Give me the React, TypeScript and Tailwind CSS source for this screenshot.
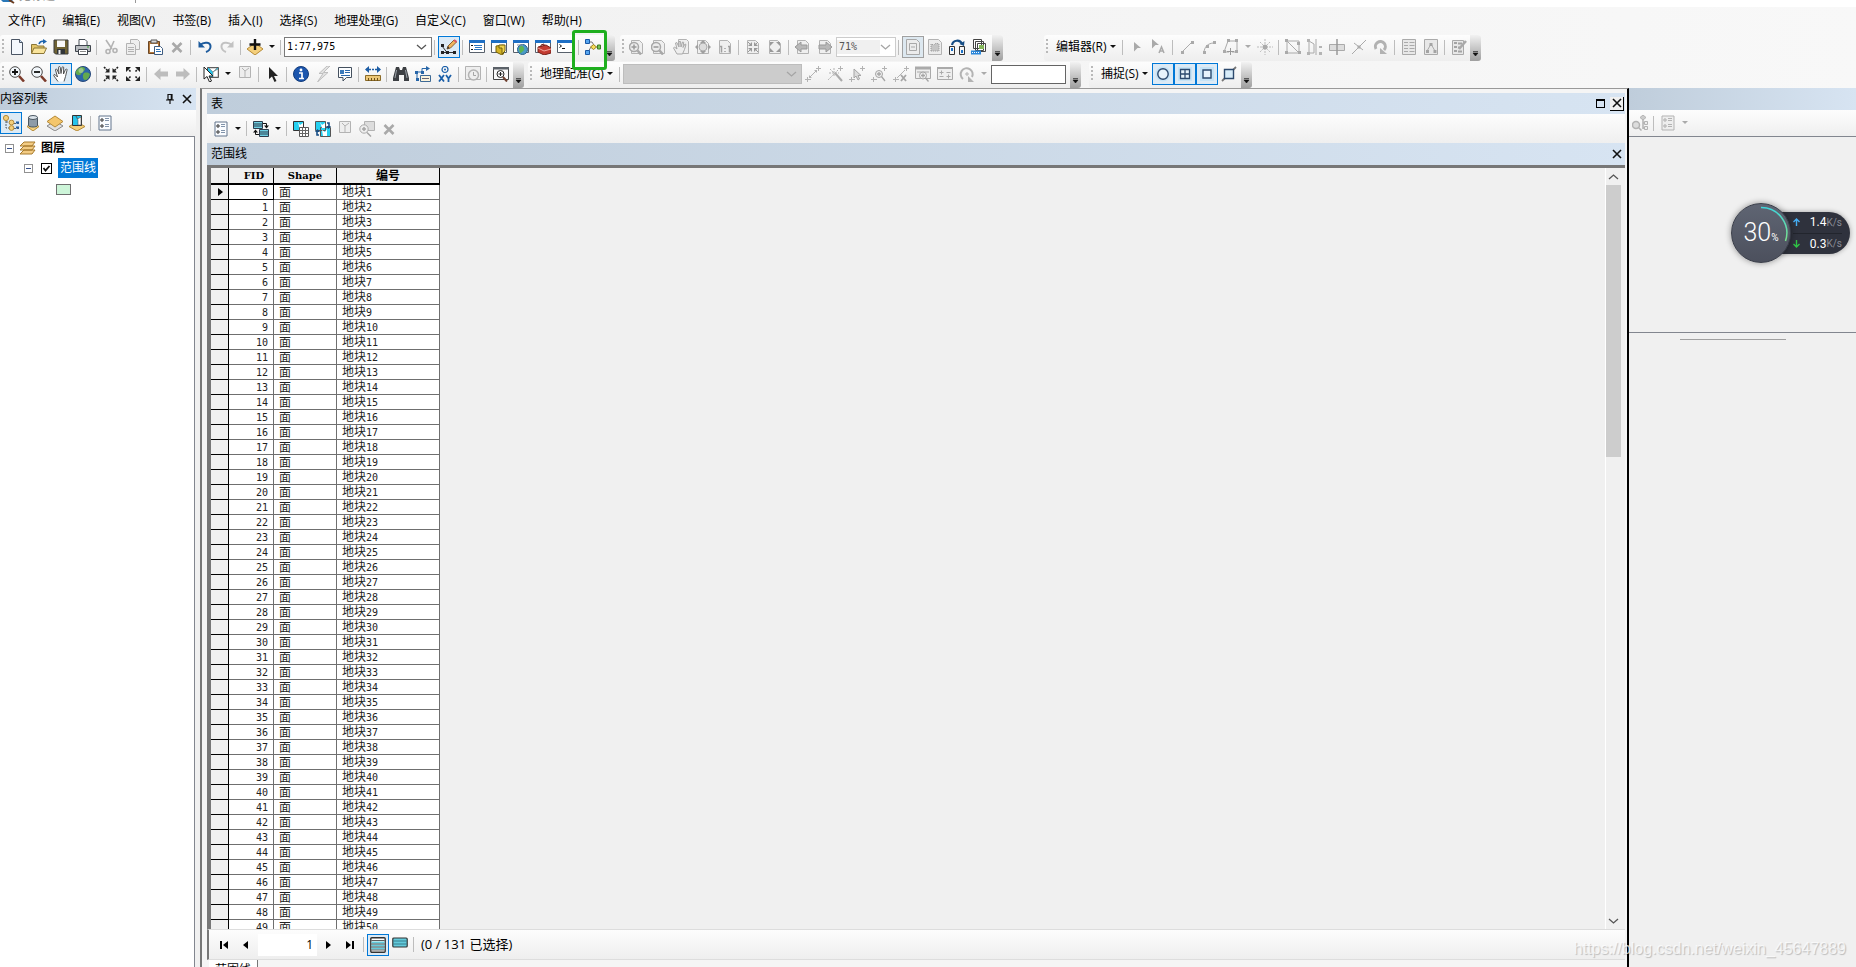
import React from 'react';

const G = '#b3b3b3';

const page = <path d="M2.5 1.5h8l3 3v10h-11z" fill="#efefef" stroke={G} />;
const win = (
  <>
    <path d="M.5 1.5h15v12H.5z" fill="#fff" stroke="#58606b" />
    <path d="M0 1h16v3H0z" fill="#1f6fc4" />
  </>
);
const plus = <path d="M11 2.5h5M13.5 0v5" stroke={G} fill="none" />;
const cross = <path d="M0 13.5h6M2.5 11v5" stroke={G} fill="none" />;

const icons: Record<string, React.ReactNode> = {
  new: (
    <>
      <path d="M2.5 .5h8l3 3v12h-11z" fill="#f4f8fd" stroke="#4a5564" />
      <path d="M10.5 .5v3h3" fill="#c8dcf0" stroke="#4a5564" />
    </>
  ),
  open: (
    <>
      <path d="M.5 14V5.5h5l1 1.5h6.500v3" fill="#e2c568" stroke="#8a7535" />
      <path d="M.5 14.5 3 9h12.500L13 14.5z" fill="#f9e49c" stroke="#8a7535" />
      <path d="M8 5c1-2.500 3-3 5-2.500" fill="none" stroke="#1d64ad" strokeWidth="1.600" />
      <path d="m12 0 4 2.500L12 5z" fill="#1d64ad" />
    </>
  ),
  save: (
    <>
      <path d="M1 1h14v14H2.500L1 13.500z" fill="#6f6232" stroke="#383a3c" />
      <path d="M4 1.500h8V8H4z" fill="#f8f8f8" />
      <path d="M4 10h8v5H4z" fill="#303438" />
      <path d="M5.500 11h2v4h-2z" fill="#eee" />
    </>
  ),
  print: (
    <>
      <path d="M4 6V.5h6l2 2V6" fill="#fff" stroke="#4a5058" />
      <path d="M.5 6.500h15v6H.5z" fill="#b9bcc0" stroke="#3f454d" />
      <path d="M3.500 10.500h9v5h-9z" fill="#fff" stroke="#3f454d" />
      <path d="M5 12.500h6" stroke="#888" />
      <path d="M12 8h2" stroke="#37a637" />
    </>
  ),
  cut: (
    <g fill="none" stroke={G} strokeWidth="1.600">
      <path d="m3 1 6 9M11 2 7 11" />
      <circle cx="5" cy="12.500" r="2" />
      <circle cx="12" cy="11.500" r="2" />
    </g>
  ),
  copy: (
    <>
      <path d="M5.500 .5h7l2 2v8h-9z" fill="#eee" stroke={G} />
      <path d="M1.500 4.500h7l2 2v9h-9z" fill="#eee" stroke={G} />
      <path d="M3 8.500h6M3 10.500h6M3 12.500h6" stroke={G} />
    </>
  ),
  paste: (
    <>
      <path d="M1.500 2.500h11v12h-11z" fill="#b5793a" stroke="#6b4726" />
      <path d="M4 1h6v3H4z" fill="#d9d9d9" stroke="#555" />
      <path d="M3 5h8v8H3z" fill="#fff" />
      <path d="M7.500 7.500h6l2 2v6h-8z" fill="#fff" stroke="#3f5c80" />
      <path d="M9 10.500h4M9 12.500h5" stroke="#2f74b8" />
    </>
  ),
  del: <path d="m3.500 4 9 9M12.500 4l-9 9" stroke="#a9a9a9" strokeWidth="2.600" fill="none" />,
  undo: (
    <>
      <path d="M3 6c4-3.500 11-3 10.500 2-.3 2.500-2 4-4.500 5" fill="none" stroke="#1c5a9c" strokeWidth="2" />
      <path d="M1.500 2v6.500H8z" fill="#1c5a9c" />
    </>
  ),
  redo: (
    <>
      <path d="M13 6C9 2.500 2 3 2.500 8c.3 2.500 2 4 4.500 5" fill="none" stroke="#c2c2c2" strokeWidth="2" />
      <path d="M14.500 2v6.500H8z" fill="#c2c2c2" />
    </>
  ),
  add: (
    <>
      <path d="m8 4 8 6-8 6-8-6z" fill="#f4cf7b" stroke="#b58a37" />
      <path d="M8 0v11M2.500 5.500h11" stroke="#111" strokeWidth="2.400" />
    </>
  ),
  editor: (
    <>
      <path d="m1 7 5 6.500h9M1 13.500h5" stroke="#333" fill="none" />
      <path d="M0 5h3v3H0zM5 12h3v3H5zM0 12h3v3H0zM12 12h3v3h-3z" fill="#222" />
      <path d="m6 10 1-3 6-6 2.500 2-6 6z" fill="#f0b45c" stroke="#8c6130" />
      <path d="m13 1 2.500 2" stroke="#d8586a" strokeWidth="2" />
      <path d="m6 10 1-3 1.500 2z" fill="#333" />
    </>
  ),
  toc: (
    <>
      {win}
      <path d="M2 6.500h2M2 10.500h2" stroke="#111" />
      <path d="M5 6.500h8M6 8.500h7M5 10.500h8" stroke="#2b74bf" />
    </>
  ),
  catalog: (
    <>
      {win}
      <path d="M5 7v6l6 3 1.500-1V6z" fill="#d5b322" stroke="#75610d" />
      <path d="M8 6h6v6l-3 3V9H8z" fill="#f0d54e" stroke="#75610d" />
    </>
  ),
  search: (
    <>
      {win}
      <circle cx="9.500" cy="10.500" r="5" fill="#4a9bc6" stroke="#27618d" />
      <path d="M6 9c2-3 4-2 5 0s-2 4-3 5-2-3-2-5z" fill="#5cb552" />
      <path d="M4 6h6" stroke="#88939e" />
    </>
  ),
  toolbox: (
    <>
      {win}
      <path d="M3 8 11 6l5 3v5l-7 2-6-3z" fill="#c33b31" stroke="#762019" />
      <path d="M6 8V6l3-1v2" fill="none" stroke="#762019" />
      <path d="m3 9 6 3 7-2" fill="none" stroke="#f1a69c" />
    </>
  ),
  python: (
    <>
      {win}
      <path d="m2.500 5.500 2 1.500-2 1.500" stroke="#111" fill="none" />
      <path d="M5 9.500h3" stroke="#111" />
    </>
  ),
  model: (
    <>
      <path d="M3 3h4l3 5H6l-3 5M9 8h4" fill="none" stroke="#777" />
      <path d="M.5 .5h4v4h-4zM.5 11.500h4v4h-4z" fill="#56a5ef" stroke="#1857a5" />
      <path d="m8.500 5.500 3 2.500-3 2.500-3-2.500z" fill="#f9de59" stroke="#9c8320" />
      <path d="M12.500 6h3v4h-3z" fill="#77c255" stroke="#3c7c23" />
    </>
  ),
  pZoomIn: (
    <>
      {page}
      <circle cx="5" cy="8" r="4.500" fill="#ececec" stroke="#a8a8a8" strokeWidth="1.500" />
      <path d="M2.500 8h5M5 5.500v5" stroke="#999" strokeWidth="1.500" />
      <path d="m8.500 11.500 3.500 4" stroke="#a8a8a8" strokeWidth="2.500" />
    </>
  ),
  pZoomOut: (
    <>
      {page}
      <circle cx="5" cy="8" r="4.500" fill="#ececec" stroke="#a8a8a8" strokeWidth="1.500" />
      <path d="M2.500 8h5" stroke="#999" strokeWidth="1.500" />
      <path d="m8.500 11.500 3.500 4" stroke="#a8a8a8" strokeWidth="2.500" />
    </>
  ),
  pPan: (
    <>
      <path d="M5.500 .5h8l2 2v12h-10z" fill="#efefef" stroke={G} />
      <path d="m4 15-3.500-6 1-1L4 10 2.500 4l1.300-.5L6 8V2.500h1.500L8 8l1.500-5 1.200.3L10 8.500l2-3.500 1 .5-1.500 5L9.500 15z" fill="#eee" stroke="#a8a8a8" />
    </>
  ),
  pFull: (
    <>
      {page}
      <circle cx="8" cy="8" r="4" fill="#ddd" stroke="#aaa" />
      <path d="m8 1 3 3H5zM8 15l3-3H5zM0 8l3-3v6zM16 8l-3-3v6z" fill="#a0a0a0" />
    </>
  ),
  p11: (
    <>
      {page}
      <path d="M3 7.500h1.500v6M11 7.500h1.500v6M8 9v1M8 12v1" stroke="#a0a0a0" fill="none" strokeWidth="1.500" />
    </>
  ),
  pIn: (
    <>
      {page}
      <path d="m3 3 3 3M13 3l-3 3M3 13l3-3M13 13l-3-3" stroke="#999" />
      <path d="M7 3v4H3zM9 3v4h4zM7 13V9H3zM9 13V9h4z" fill="#999" />
    </>
  ),
  pOut: (
    <>
      {page}
      <path d="M3 3h4L3 7zM13 3H9l4 4zM3 13h4L3 9zM13 13H9l4-4z" fill="#999" />
    </>
  ),
  pBack: (
    <>
      {page}
      <path d="m0 8 6-5v3h6v4H6v3z" fill="#b8b8b8" stroke="#999" />
    </>
  ),
  pFwd: (
    <>
      {page}
      <path d="m15 8-6-5v3H2v4h7v3z" fill="#b8b8b8" stroke="#999" />
    </>
  ),
  draft: (
    <>
      <path d="M1.500 .5h10l3 3v12h-13z" fill="#ececec" stroke="#a8a8a8" />
      <path d="M4.500 4.500h7v7h-7zM6 8h4" fill="none" stroke="#a8a8a8" />
    </>
  ),
  frame: (
    <>
      <path d="M1.500 .5h10l3 3v12h-13z" fill="#ececec" stroke={G} />
      <path d="M4 12V5l3 1 2-2 3 1v7z" fill="#c5c5c5" stroke="#999" strokeDasharray="1 1" />
    </>
  ),
  layout: (
    <>
      <path d="M.5 7.500h5v8h-5zM10.500 7.500h5v8h-5z" fill="#f6f6f6" stroke="#333" />
      <path d="M2 9h2v3H2zM12 11h2v3h-2z" fill="#1c72c8" />
      <path d="M3 6c1-5 8-6 10-1" fill="none" stroke="#174e86" strokeWidth="2.200" />
      <path d="m15.500 2-.5 5-4.500-2z" fill="#174e86" />
    </>
  ),
  ddp: (
    <>
      <path d="M2.500 .5h8v9h-8zM4.500 2.500h8v9h-8zM6.500 4.500h8v8h-8z" fill="#fff" stroke="#444" />
      <path d="M8 6h5v4H8z" fill="#84b65a" />
      <path d="M0 11.500h10v4H0z" fill="#2a86d9" />
      <path d="M1 13.500h8" stroke="#fff" strokeDasharray="1 1" />
    </>
  ),
  edArrow: <path d="m5 3 7 6H8.500L5 12.500z" fill="#aaa" />,
  edAnno: (
    <>
      <path d="m1 0 7 6H4.500L1 9.500z" fill="#aaa" />
      <path d="m8 14 2.500-6L13 14M9 12h3.500" stroke="#aaa" strokeWidth="1.500" fill="none" />
    </>
  ),
  edLine: (
    <>
      <path d="m3 13 10-10" stroke="#aaa" />
      <path d="M2 12h3v3H2zM12 2h3v3h-3z" fill="#aaa" />
    </>
  ),
  edArc: (
    <>
      <path d="M3 14c0-6 4-10 10-10" stroke="#aaa" fill="none" />
      <path d="M2 12h3v3H2zM5 6h3v3H5zM12 2h3v3h-3z" fill="#aaa" />
    </>
  ),
  edPoly: (
    <>
      <path d="M5 2h9v11H9M5 2 1 13h5" stroke="#aaa" fill="none" />
      <path d="M4 0h3v3H4zM12 0h3v3h-3zM12 11h3v3h-3zM0 11h3v3H0z" fill="#aaa" />
      <path d="M7.500 9v7M4 12.500h7" stroke="#999" />
    </>
  ),
  edPoint: (
    <>
      <path d="M8 0v16M0 8h16" stroke="#bbb" strokeDasharray="2 1" />
      <path d="m3 3 10 10M13 3 3 13" stroke="#bbb" strokeDasharray="2 1" />
      <circle cx="8" cy="8" r="2.500" fill="#aaa" />
    </>
  ),
  edVert: (
    <>
      <path d="M2 2h12v12H2zM2 2l12 12" stroke="#aaa" fill="none" />
      <path d="M0 0h3v3H0zM12 3h3v3h-3zM0 12h3v3H0zM13 12h3v3h-3z" fill="#aaa" />
    </>
  ),
  edReshape: (
    <>
      <path d="M2 2v12h5V5zM9 0v16" stroke="#aaa" fill="none" />
      <path d="M0 0h3v3H0zM0 13h3v3H0zM12 7h3v2h-3zM12 13h3v3h-3z" fill="#b4b4b4" />
    </>
  ),
  edCut: (
    <>
      <path d="M.5 5.500h15v6H.5z" fill="#ddd" stroke="#aaa" />
      <path d="M8 0v16" stroke="#999" strokeWidth="1.500" />
    </>
  ),
  edSplit: (
    <>
      <path d="M1 15 15 1M3 4l9 7" stroke="#aaa" />
      <path d="M6.500 6.500h3v3h-3z" fill="#aaa" />
    </>
  ),
  rotate: (
    <>
      <path d="M3 10A5 5 0 1 1 11 11" fill="none" stroke="#b2b2b2" strokeWidth="3" />
      <path d="M7 9v6h7z" fill="#b2b2b2" />
    </>
  ),
  attrs: (
    <>
      <path d="M1.500 .5h13v15h-13z" fill="#e8e8e8" stroke="#aaa" />
      <path d="M3 3.500h4M3 6.500h4M3 9.500h4M3 12.500h4M8.500 3.500h5M8.500 6.500h5M8.500 9.500h5M8.500 12.500h5" stroke="#aaa" />
    </>
  ),
  sketch: (
    <>
      <path d="M1.500 .5h13v15h-13z" fill="#e8e8e8" stroke="#aaa" />
      <path d="M4 12l4-7 4 7" fill="none" stroke="#aaa" />
      <path d="M3 11h3v3H3zM6.500 4h3v3h-3zM10.500 11h3v3h-3z" fill="#a4a4a4" />
    </>
  ),
  create: (
    <>
      <path d="M1.500 1.500h11v14h-11z" fill="#e8e8e8" stroke="#aaa" />
      <path d="M3 4h3M3 8h3M3 12h3M7 4.500h4M7 8.500h2M7 12.500h4" stroke="#a4a4a4" strokeWidth="2" />
      <path d="m8 10 7-8" stroke="#aaa" strokeWidth="2.500" />
    </>
  ),
  zoomIn: (
    <>
      <circle cx="6" cy="6" r="5.300" fill="#f2f7fb" stroke="#4b4b4b" />
      <path d="M3 6h6M6 3v6" stroke="#111" strokeWidth="1.800" />
      <path d="m10 10 5 5.500" stroke="#7c3b2b" strokeWidth="2.600" />
    </>
  ),
  zoomOut: (
    <>
      <circle cx="6" cy="6" r="5.300" fill="#f2f7fb" stroke="#4b4b4b" />
      <path d="M3 6h6" stroke="#111" strokeWidth="1.800" />
      <path d="m10 10 5 5.500" stroke="#7c3b2b" strokeWidth="2.600" />
    </>
  ),
  pan: (
    <path d="M5 15.500 1 10c-1-1.500.5-2 1.500-1L4.500 11 2.500 4C2.300 2.800 3.800 2.500 4.200 3.800L6 8 5.500 1.500C5.600.2 7.200.3 7.300 1.500L8 7.500l1-6c.3-1.200 1.800-1 1.700.3L10.500 8l2-4.500c.6-1 1.900-.5 1.500.7l-1.500 6.300-1.500 5" fill="#fff" stroke="#444" strokeWidth=".9" />
  ),
  globe: (
    <>
      <circle cx="8" cy="8" r="7.500" fill="#2c66a8" stroke="#26477a" />
      <path d="M3 3c3-3 7-2 7 0S7 6 6 8s-4 1-5 0 0-4 2-5zM9 7c3-1 5 0 6 1-1 4-3 6-5 6S7 9 9 7z" fill="#63a94d" />
      <circle cx="6" cy="4.500" r="2.500" fill="#fff" opacity=".35" />
    </>
  ),
  fixIn: (
    <>
      <path d="m1 1 4 4M15 1l-4 4M1 15l4-4M15 15l-4-4" stroke="#222" strokeWidth="1.600" strokeDasharray="2 1" />
      <path d="M6.500 2v4.500H2zM9.500 2v4.500H14zM6.500 14V9.500H2zM9.500 14V9.500H14z" fill="#222" />
    </>
  ),
  fixOut: (
    <>
      <path d="m2 2 4 4M14 2l-4 4M2 14l4-4M14 14l-4-4" stroke="#222" strokeWidth="1.600" strokeDasharray="2 1" />
      <path d="M1 1h5L1 6zM15 1h-5l5 5zM1 15h5l-5-5zM15 15h-5l5-5z" fill="#222" />
    </>
  ),
  back: <path d="m1 8 6.500-6v3.500H15v5H7.500V14z" fill="#bdbdbd" />,
  fwd: <path d="m15 8-6.500-6v3.500H1v5h7.500V14z" fill="#bdbdbd" />,
  select: (
    <>
      <path d="M4.500 1.500h11v10h-11z" fill="#27c3e8" stroke="#555" />
      <path d="m6 2 4 4 4-4zM10 6v5h5V3z" fill="#fff" stroke="#777" strokeWidth=".6" />
      <path d="M1 1v12l3-2.500L6.500 16l2-1-2.500-5h4z" fill="#fff" stroke="#222" />
    </>
  ),
  clear: (
    <>
      <path d="M2.500 .5h11v11h-11z" fill="#eee" stroke={G} />
      <path d="m5 2 3 3 4-3M8 5v6" stroke={G} fill="none" />
    </>
  ),
  pointer: <path d="M4 1v12l3-2.500L9.500 16l2-1L9 10h4z" fill="#222" />,
  info: (
    <>
      <circle cx="8" cy="8" r="7.500" fill="#1c56ae" stroke="#123b7b" />
      <circle cx="8" cy="4" r="1.400" fill="#fff" />
      <path d="M6 7h3v5M6 12.500h5" stroke="#fff" strokeWidth="1.700" fill="none" />
    </>
  ),
  bolt: <path d="M12 0 4 7.500h4L2.500 16 13 6.500H8.500L15 0z" fill="#e2e2e2" stroke="#b4b4b4" strokeWidth=".8" />,
  html: (
    <>
      <path d="M1.500 1.500h13v10h-5L6 15v-3.500H1.500z" fill="#fbfdff" stroke="#44505e" />
      <path d="M3 4h4v4H3z" fill="#3b7abb" />
      <path d="M8 4.500h5M8 6.500h5M4 9.500h9" stroke="#2c68aa" />
    </>
  ),
  measure: (
    <>
      <path d="M1 3.500h14" stroke="#1d5da5" strokeWidth="1.500" strokeDasharray="5 1 2 1" />
      <path d="M0 3.500 4 0v7zM16 3.500 12 0v7z" fill="#1d5da5" />
      <path d="M.5 9.500h15v5H.5z" fill="#ecc777" stroke="#8a6a27" />
      <path d="M3.500 12v3M6.500 12v3M9.500 12v3M12.500 12v3" stroke="#6d5018" />
    </>
  ),
  find: (
    <>
      <path d="M3 1h3l1 3h2l1-3h3l3 11v3h-5V9H6v6H0v-3z" fill="#3c3f43" />
      <path d="M3.500 4 2 12M12.500 4l1.500 8" stroke="#9ca3aa" />
    </>
  ),
  route: (
    <>
      <path d="M5.500 9.500h10v6h-10z" fill="#fbf3dc" stroke="#3f6a95" />
      <path d="M2 13V6h5V2.500h5" fill="none" stroke="#2766a8" />
      <path d="M0 5h3v3H0zM11 0l4 2.500L11 5zM1 12h3v3H1zM6 5h3v3H6z" fill="#2766a8" />
      <path d="M7 12.500h7" stroke="#667" />
    </>
  ),
  xy: (
    <>
      <circle cx="8" cy="3.500" r="3" fill="none" stroke="#1b5fa8" strokeWidth="1.200" />
      <circle cx="8" cy="3.500" r="1" fill="#1b5fa8" />
      <path d="m2 9 5 6.500M7 9l-5 6.500M9 9l2.500 3.500V16M14 9l-2.500 3.500" fill="none" stroke="#1b5fa8" strokeWidth="1.800" />
    </>
  ),
  time: (
    <>
      <path d="M.5 .5h15v13H.5z" fill="#eee" stroke={G} />
      <circle cx="8.500" cy="9" r="5" fill="#eee" stroke={G} strokeWidth="1.500" />
      <path d="M8.500 6v3.500H11" stroke="#a5a5a5" fill="none" />
    </>
  ),
  viewer: (
    <>
      <path d="M.5 1.500h15v12H.5z" fill="#fafafa" stroke="#444" />
      <path d="M0 1h16v2.500H0z" fill="#5b6168" />
      <circle cx="7.500" cy="8" r="3.500" fill="#fff" stroke="#222" />
      <path d="M5.500 8h4M7.500 6v4" stroke="#222" />
      <path d="m10 11 4 4.500" stroke="#704030" strokeWidth="2" />
    </>
  ),
  gLink: (
    <>
      {plus}
      {cross}
      <path d="m4 12 8-8" stroke={G} />
      <path d="M9 4h3v3zM4 9v3h3z" fill={G} />
    </>
  ),
  gWand: (
    <>
      {plus}
      <path d="m8 7 7 8" stroke="#aaa" strokeWidth="2" />
      <path d="m3 3 8 8M11 4 1 14M7 2v9M2 7h10" stroke={G} strokeDasharray="2 1" />
    </>
  ),
  gSel: (
    <>
      {plus}
      {cross}
      <path d="M5 3v9l2-2 2 4 1.500-1L9 9.500h3z" fill="#ddd" stroke="#a5a5a5" />
    </>
  ),
  gZoom: (
    <>
      {plus}
      {cross}
      <circle cx="8" cy="8" r="3.500" fill="#eee" stroke="#a5a5a5" />
      <path d="M6 8h4M8 6v4M10.500 10.500 14 15" stroke="#a5a5a5" strokeWidth="1.300" />
    </>
  ),
  gDel: (
    <>
      {plus}
      {cross}
      <path d="m4 12 8-8" stroke={G} />
      <path d="m8 9 5 6M13 9l-5 6" stroke="#a5a5a5" strokeWidth="1.800" />
    </>
  ),
  gView: (
    <>
      <path d="M.5 1.500h15v11H.5z" fill="#eee" stroke="#aaa" />
      <path d="M0 1h16v2H0zM2 6h12" fill="#aaa" stroke="#aaa" />
      <circle cx="8" cy="9.500" r="3.500" fill="#eee" stroke="#a5a5a5" />
      <path d="M6 9.500h4M8 7.500v4M10.500 12l3 3.500" stroke="#a5a5a5" strokeWidth="1.300" />
    </>
  ),
  gTable: (
    <>
      <path d="M.5 1.500h15v12H.5z" fill="#eee" stroke="#aaa" />
      <path d="M0 1h16v2H0z" fill="#aaa" />
      <path d="M2.500 6.500h4M9.500 6.500h4M2.500 10.500h4M9.500 10.500h4M4.500 4.500v4M11.500 8.500v4" stroke="#aaa" />
    </>
  ),
  gRotate: (
    <>
      <path d="M4 13A6 6 0 1 1 13 11" fill="none" stroke={G} strokeWidth="2" />
      <path d="M9 10v6h6z" fill={G} />
      <path d="M8 6v4M6 8h4" stroke={G} />
    </>
  ),
  snapPoint: (
    <>
      <circle cx="8" cy="8" r="7.500" fill="#c6e3f6" />
      <circle cx="8" cy="8" r="5.200" fill="#e7f3fb" stroke="#2d4a6e" strokeWidth="1.400" />
    </>
  ),
  snapEnd: (
    <>
      <path d="M1 1h14v14H1z" fill="#c6e3f6" />
      <path d="M3.500 3.500h9v9h-9zM8 3.500v9M3.500 8h9" fill="#e7f3fb" stroke="#2d4a6e" strokeWidth="1.300" />
    </>
  ),
  snapVertex: (
    <>
      <path d="M1 1h14v14H1z" fill="#c6e3f6" />
      <path d="M4 4h8v8H4z" fill="#e7f3fb" stroke="#2d4a6e" strokeWidth="1.400" />
    </>
  ),
  snapEdge: (
    <>
      <path d="M1 15 15 1" stroke="#777" strokeWidth="1.800" />
      <path d="M3.500 3.500h9v9h-9z" fill="#d8ecf9" stroke="#2d4a6e" strokeWidth="1.400" />
    </>
  ),
  listOrder: (
    <>
      <path d="M3 3v10h5M3 7h5M11 8.500h5M11 13.500h5" stroke="#56616d" fill="none" strokeDasharray="2 1" />
      <circle cx="3" cy="3" r="2.600" fill="#f4cf7b" stroke="#b58a37" />
      <circle cx="8.500" cy="7.500" r="2.400" fill="#f4cf7b" stroke="#b58a37" />
      <circle cx="8.500" cy="13" r="2.400" fill="#f4cf7b" stroke="#b58a37" />
      <path d="M13 7.500h3M13 12.500h3" stroke="#1e5fa8" strokeWidth="2" />
    </>
  ),
  listSource: (
    <>
      <path d="m8 7 6 4.500L8 16l-6-4.500z" fill="#f4cf7b" stroke="#b58a37" />
      <path d="M3.500 2.500v8c0 2 9 2 9 0v-8z" fill="#8e9ba8" stroke="#4a5661" />
      <ellipse cx="8" cy="2.500" rx="4.500" ry="2" fill="#dbe3ea" stroke="#4a5661" />
    </>
  ),
  listVisible: (
    <>
      <path d="m8 6 8 5-8 5-8-5z" fill="#e0e0e0" stroke="#888" />
      <path d="m8 1 8 5.500L8 12 0 6.500z" fill="#f4c66c" stroke="#b58a37" />
    </>
  ),
  listSelected: (
    <>
      <path d="m8 7 8 4.500L8 16l-8-4.500z" fill="#f4cf7b" stroke="#b58a37" />
      <path d="M3.500 .5h9v10h-9z" fill="#25c4ec" stroke="#333" />
      <path d="m7 1 1.500 3L12 2v8H9V5z" fill="#fff" stroke="#555" strokeWidth=".6" />
    </>
  ),
  options: (
    <>
      <path d="M2 1h12v14H2z" fill="#fafcff" stroke="#63758c" />
      <circle cx="5" cy="5" r="1.200" fill="none" stroke="#222" />
      <circle cx="5" cy="11" r="1.200" fill="none" stroke="#222" />
      <path d="M8 3.500h4M8 5.500h4M8 9.500h4M8 11.500h4" stroke="#8193aa" />
    </>
  ),
  optionsOff: (
    <>
      <path d="M2 1h12v14H2z" fill="#eee" stroke={G} />
      <circle cx="5" cy="5" r="1.200" fill="none" stroke="#aaa" />
      <circle cx="5" cy="11" r="1.200" fill="none" stroke="#aaa" />
      <path d="M8 3.500h4M8 5.500h4M8 9.500h4M8 11.500h4" stroke={G} />
    </>
  ),
  treeOff: (
    <>
      <circle cx="4" cy="10" r="3.500" fill="#ddd" stroke={G} strokeWidth="1.500" />
      <path d="m6.500 12.500 3 3M11 5v9M11 8h5M11 13h5" stroke={G} strokeWidth="1.500" />
      <path d="m11 0 3 2.500L11 5 8 2.500z" fill="#ccc" stroke={G} />
      <path d="M12.500 6.500h3v3h-3zM12.500 11.500h3v3h-3z" fill="#eee" stroke={G} />
    </>
  ),
  related: (
    <>
      <path d="M.5 .5h9v7h-9zM6.500 8.500h9v7h-9z" fill="#6fd0e4" stroke="#2d3d4d" />
      <path d="M.5 3h9M.5 5h9M6.500 11h9M6.500 13h9" stroke="#2d3d4d" />
      <path d="M10 2.500h3.500V5M6 13.500H2.500V11" fill="none" stroke="#111" />
      <path d="M11 4.500h5l-2.500 3zM0 11.500h5L2.500 8.500z" fill="#111" />
    </>
  ),
  selTable: (
    <>
      <path d="M.5 .5h10v9H.5z" fill="#25d0f0" stroke="#333" />
      <path d="m5 1 2 3 3-2v7H7z" fill="#fff" />
      <path d="M6.500 6.500h9v9h-9z" fill="#fff" stroke="#555" />
      <path d="M6.500 9.500h9M6.500 12.500h9M9.500 6.500v9M12.500 6.500v9" stroke="#666" />
    </>
  ),
  switchSel: (
    <>
      <path d="M.5 .5h10v9H.5zM5.500 6.500h10v9h-10z" fill="#25d0f0" stroke="#555" />
      <path d="m5 1 2 3 3-2v5H7zM7 9l3 2 2-3v7H8z" fill="#fff" />
      <path d="M12 2h2v4M4 14H2v-4" fill="none" stroke="#174e86" strokeWidth="1.600" />
      <path d="M11 5h5l-2.500 3zM0 11h5L2.500 8z" fill="#174e86" />
    </>
  ),
  zoomSel: (
    <>
      <path d="M5.500 .5h10v9h-10z" fill="#ddd" stroke={G} />
      <circle cx="5" cy="8" r="4.200" fill="#eee" stroke="#aaa" />
      <path d="M3 8h4M5 6v4M8 11.500l4 4" stroke="#a5a5a5" strokeWidth="1.500" />
    </>
  ),
  rowsAll: (
    <>
      <rect x=".8" y=".8" width="14.400" height="14.400" rx="1" fill="#fff" stroke="#333" strokeWidth="1.400" />
      <path d="M1.500 5.500h13M1.500 8.500h13M1.500 11.500h13" stroke="#63cbdc" strokeWidth="2" />
      <path d="M1.500 3.500h13M1.500 7h13M1.500 10h13M1.500 13h13" stroke="#333" strokeWidth=".8" />
    </>
  ),
  rowsSel: (
    <>
      <rect x=".8" y="1" width="14.400" height="9" rx="1" fill="#63cbdc" stroke="#333" strokeWidth="1.200" />
      <path d="M1 4h14M1 7h14" stroke="#387f8e" />
    </>
  ),
  layers: (
    <path d="m0 14 4-4h11l-3 4zM0 10l4-4h11l-3 4zM0 6l4-4h11l-3 4z" fill="#f3cc84" stroke="#a77a2c" />
  ),
};

interface ToolProps {
  icon: string;
  on?: boolean;
  muted?: boolean;
}

const Tool = ({ icon, on, muted }: ToolProps) => (
  <button
    aria-label={icon}
    className={`flex h-[22px] w-[22px] shrink-0 items-center justify-center ${
      on ? (muted ? 'border border-[#a0a0a0] bg-[#dde8f0]' : 'border border-[#0078d7] bg-[#dceaf5]') : ''
    }`}
  >
    <svg width="16" height="16" viewBox="0 0 16 16" className="shrink-0">
      {icons[icon]}
    </svg>
  </button>
);

const Tools = ({ names }: { names: string }) => (
  <>
    {names.split(' ').map((name) => (
      <Tool key={name} icon={name} />
    ))}
  </>
);

const Sep = () => <span className="mr-[3px] ml-[2px] h-[15px] w-px shrink-0 bg-[#bdbdbd]" />;

const Caret = ({ off }: { off?: boolean }) => (
  <svg width="12" height="6" viewBox="0 0 12 6" className="shrink-0">
    <path d="M3 1h6L6 4z" fill={off ? '#aaa' : '#111'} />
  </svg>
);

const Grip = () => (
  <span className="mr-[2px] ml-[2px] h-4 w-[2px] shrink-0 bg-[repeating-linear-gradient(to_bottom,#b9b9b9_0_2px,transparent_2px_4px)]" />
);

const More = () => (
  <button
    aria-label="more"
    className="flex w-[11px] shrink-0 items-end justify-center rounded-r-[3px] bg-gradient-to-b from-[#f2f2f2] to-[#9f9f9f] pb-1"
  >
    <svg width="7" height="7" viewBox="0 0 7 7">
      <path d="M1 1.500h5M1 3h5L3.500 6z" fill="#111" stroke="#111" strokeWidth=".6" />
    </svg>
  </button>
);

const Bar = ({ children, className }: { children: React.ReactNode; className: string }) => (
  <div className={`flex h-[26px] shrink-0 rounded-[3px] bg-gradient-to-b from-[#fdfdfd] to-[#eeeeee] ${className}`}>
    <div className="flex min-w-0 flex-1 items-center pb-[2px]">
      <Grip />
      {children}
    </div>
    <More />
  </div>
);

const BarMenu = ({ children }: { children: React.ReactNode }) => (
  <button className="flex items-center pr-px pl-[6px] text-xs leading-4 whitespace-nowrap">
    {children}
    <Caret />
  </button>
);

const Chevron = ({ up, off }: { up?: boolean; off?: boolean }) => (
  <svg width="11" height="8" viewBox="0 0 11 8" className="pointer-events-none shrink-0">
    <path d={up ? 'm1 6 4.500-4L10 6' : 'm1 2 4.500 4L10 2'} fill="none" stroke={off ? '#a5a5a5' : '#555'} strokeWidth="1.300" />
  </svg>
);

const Cross = () => (
  <svg width="10" height="10" viewBox="0 0 10 10">
    <path d="m1 1 8 8M9 1 1 9" stroke="#111" strokeWidth="1.600" />
  </svg>
);

const menus = ['文件(F)', '编辑(E)', '视图(V)', '书签(B)', '插入(I)', '选择(S)', '地理处理(G)', '自定义(C)', '窗口(W)', '帮助(H)'];

const rows = Array.from({ length: 50 }, (_, i) => i);

const MenuBar = () => (
  <nav className="flex h-7 shrink-0 items-center pb-px">
    {menus.map((m) => (
      <button key={m} className="pr-[9px] pl-2 text-xs leading-4 whitespace-nowrap">
        {m}
      </button>
    ))}
  </nav>
);

const Toolbars = () => (
  <div className="shrink-0">
    <div className="mb-px flex">
      <Bar className="w-[615px]">
        <Tools names="new open save print" />
        <Sep />
        <Tools names="cut copy paste del" />
        <Sep />
        <Tools names="undo redo" />
        <Sep />
        <Tool icon="add" />
        <Caret />
        <Sep />
        <div className="flex h-5 w-[148px] shrink-0 items-center border border-[#7a7a7a] bg-white pr-1">
          <select aria-label="scale" defaultValue="1:77,975" className="min-w-0 flex-1 appearance-none px-[2px] font-['DejaVu_Sans_Mono',monospace] text-[10px] leading-4 outline-none">
            <option>1:77,975</option>
          </select>
          <Chevron />
        </div>
        <Sep />
        <Tool icon="editor" on />
        <Sep />
        <Tools names="toc catalog search toolbox python" />
        <Sep />
        <div className="relative">
          <Tool icon="model" />
          <span className="pointer-events-none absolute -top-[6px] -left-[10px] z-10 h-10 w-[35px] rounded-[3px] border-3 border-[#1faf1f]" />
        </div>
      </Bar>
      <Bar className="ml-[5px] w-[383px]">
        <Tools names="pZoomIn pZoomOut pPan pFull p11" />
        <Sep />
        <Tools names="pIn pOut" />
        <Sep />
        <Tools names="pBack pFwd" />
        <div className="flex h-5 w-[60px] shrink-0 items-center border border-[#cccccc] bg-white pr-1">
          <select aria-label="zoom" defaultValue="71%" className="min-w-0 flex-1 appearance-none bg-[#f0f0f0] px-[2px] font-['DejaVu_Sans_Mono',monospace] text-[10px] leading-[14px] text-[#555] outline-none">
            <option>71%</option>
          </select>
          <Chevron off />
        </div>
        <Sep />
        <Tool icon="draft" on muted />
        <Tools names="frame layout ddp" />
      </Bar>
      <Bar className="ml-[41px] w-[437px]">
        <BarMenu>编辑器(R)</BarMenu>
        <Sep />
        <Tools names="edArrow edAnno" />
        <Sep />
        <Tools names="edLine edArc edPoly" />
        <Caret off />
        <Tool icon="edPoint" />
        <Sep />
        <Tools names="edVert edReshape edCut edSplit rotate" />
        <Sep />
        <Tools names="attrs sketch" />
        <Sep />
        <Tool icon="create" />
      </Bar>
    </div>
    <div className="flex">
      <Bar className="w-[524px]">
        <Tools names="zoomIn zoomOut" />
        <Tool icon="pan" on />
        <Tool icon="globe" />
        <Sep />
        <Tools names="fixIn fixOut" />
        <Sep />
        <Tools names="back fwd" />
        <Sep />
        <Tool icon="select" />
        <Caret />
        <Tool icon="clear" />
        <Sep />
        <Tool icon="pointer" />
        <Sep />
        <Tools names="info bolt html" />
        <Sep />
        <Tool icon="measure" />
        <Sep />
        <Tools names="find route xy" />
        <Sep />
        <Tool icon="time" />
        <Sep />
        <Tool icon="viewer" />
      </Bar>
      <Bar className="ml-1 w-[553px]">
        <BarMenu>地理配准(G)</BarMenu>
        <Sep />
        <div className="flex h-5 w-[179px] shrink-0 items-center justify-end border border-[#bdbdbd] bg-[#cccccc] pr-1">
          <select aria-label="layer" disabled className="min-w-0 flex-1 appearance-none" />
          <Chevron off />
        </div>
        <Tools names="gLink gWand gSel gZoom gDel gView gTable gRotate" />
        <Caret off />
        <input aria-label="angle" className="ml-px h-[19px] w-[75px] border border-[#646464] bg-white outline-none" />
      </Bar>
      <Bar className="ml-2 w-[163px]">
        <BarMenu>捕捉(S)</BarMenu>
        <Tool icon="snapPoint" on />
        <Tool icon="snapEnd" on />
        <Tool icon="snapVertex" on />
        <Tool icon="snapEdge" />
      </Bar>
    </div>
  </div>
);

const Expander = () => (
  <button aria-label="collapse" className="flex h-[9px] w-[9px] items-center justify-center border border-[#919191] bg-white">
    <span className="h-px w-[5px] bg-[#34508c]" />
  </button>
);

const Contents = () => (
  <aside className="flex w-[196px] shrink-0 flex-col">
    <div className="flex h-[22px] shrink-0 items-center bg-gradient-to-r from-[#bfcddb] to-[#d7e4f2] pr-1 text-xs">
      <span className="flex-1">内容列表</span>
      <button aria-label="pin" className="mr-2">
        <svg width="8" height="10" viewBox="0 0 8 10">
          <path d="M2 .5h4v5H2zM5.300 0v6M0 6h8M4 6v4" fill="none" stroke="#111" strokeWidth="1.200" />
        </svg>
      </button>
      <button aria-label="close">
        <Cross />
      </button>
    </div>
    <div className="flex h-[26px] shrink-0 items-center bg-gradient-to-b from-[#fdfdfd] to-[#efefef]">
      <Tool icon="listOrder" on />
      <Tools names="listSource listVisible listSelected" />
      <Sep />
      <Tool icon="options" />
    </div>
    <div className="mr-px flex-1 border-t border-r border-[#82868f] bg-white pt-px text-xs">
      <div className="flex h-5 items-center gap-[6px] pl-[5px]">
        <Expander />
        <svg width="16" height="16" viewBox="0 0 16 16">
          {icons.layers}
        </svg>
        <span className="-ml-px font-bold">图层</span>
      </div>
      <div className="flex h-5 items-center pl-6">
        <Expander />
        <label className="flex items-center">
          <input
            type="checkbox"
            defaultChecked
            className="ml-2 h-[11px] w-[11px] appearance-none border border-black bg-white outline-none"
          />
          <svg width="11" height="11" viewBox="0 0 11 11" className="-ml-[11px]">
            <path d="m2.500 5 2 2.500L8.500 3" fill="none" stroke="#111" strokeWidth="1.800" />
          </svg>
          <span className="ml-[6px] bg-[#0078d7] px-[2px] leading-5 text-white">范围线</span>
        </label>
      </div>
      <div className="mt-[6px] ml-14 h-[11px] w-[15px] border border-[#6e6e6e] bg-[#cdf5d9]" />
    </div>
  </aside>
);

const Grid = () => (
  <div className="flex min-h-0 flex-1 border-t-3 border-l-4 border-[#777777] bg-[#f0f0f0]">
    <div className="min-w-0 flex-1 overflow-hidden">
      <table className="w-[229px] table-fixed border-separate border-spacing-0 text-xs text-[#222]">
        <colgroup>
          <col className="w-[18px]" />
          <col className="w-[45px]" />
          <col className="w-[63px]" />
          <col className="w-[103px]" />
        </colgroup>
        <thead>
          <tr className="h-[17px] font-['DejaVu_Serif','Noto_Sans_CJK_SC',serif] leading-[14px] text-black">
            <th className="border-r border-b-2 border-black p-0" />
            <th className="border-r border-b-2 border-black p-0 pl-[6px] text-[10px]">FID</th>
            <th className="border-r border-b-2 border-black p-0 text-[10px]">Shape</th>
            <th className="border-r border-b-2 border-black p-0">编号</th>
          </tr>
        </thead>
        <tbody>
          {rows.map((i) => (
            <tr key={i} className="h-[15px] leading-[13px]">
              <td className="border-r border-b border-black p-0 pl-[7px]">
                {i === 0 && (
                  <svg width="5" height="8" viewBox="0 0 5 8">
                    <path d="m0 0 5 4-5 4z" fill="#000" />
                  </svg>
                )}
              </td>
              <td
                className={`border-r border-b bg-white p-0 pr-[5px] text-right font-['DejaVu_Sans_Mono',monospace] text-[10px] ${
                  i === 0 ? 'border-black' : 'border-[#6f6f6f]'
                }`}
              >
                {i}
              </td>
              <td className="border-r border-b border-[#6f6f6f] bg-white p-0 pl-[5px]">面</td>
              <td className="border-r border-b border-[#6f6f6f] bg-white p-0 pl-[5px]">
                地块<span className="font-['DejaVu_Sans_Mono',monospace] text-[10px]">{i + 1}</span>
              </td>
            </tr>
          ))}
        </tbody>
      </table>
    </div>
    <div className="mr-1 flex w-4 shrink-0 flex-col items-center border-l border-white">
      <button aria-label="scroll up" className="flex h-[17px] items-center">
        <Chevron up />
      </button>
      <div className="h-[272px] w-full bg-[#cdcdcd]" />
      <button aria-label="scroll down" className="mt-auto flex h-[17px] items-center">
        <Chevron />
      </button>
    </div>
  </div>
);

const NavIcon = ({ d, label }: { d: string; label: string }) => (
  <button aria-label={label} className="flex h-[22px] w-[22px] items-center justify-center">
    <svg width="10" height="8" viewBox="0 0 10 8">
      <path d={d} fill="#000" />
    </svg>
  </button>
);

const TableWindow = () => (
  <main className="ml-1 flex min-w-0 flex-1 flex-col border-t border-r-2 border-l-2 border-t-[#999999] border-r-black border-l-[#777777] bg-[#f5f5f5] pt-1 pr-[2px] pl-[5px]">
    <div className="flex h-[21px] shrink-0 items-center bg-gradient-to-r from-[#bfcddb] to-[#d7e4f2] pr-px pl-1 text-xs">
      <span className="flex-1">表</span>
      <button aria-label="maximize" className="mr-[5px] h-[9px] w-[9px] border border-t-2 border-black" />
      <button aria-label="close table" className="flex h-[14px] w-[14px] items-center justify-center border-r border-b border-black bg-[#f0f0f0]">
        <Cross />
      </button>
    </div>
    <div className="flex h-[29px] shrink-0 items-center bg-gradient-to-b from-[#fdfdfd] to-[#efefef] pl-[3px]">
      <Tool icon="options" />
      <Caret />
      <Sep />
      <Tool icon="related" />
      <Caret />
      <Sep />
      <Tools names="selTable switchSel clear zoomSel del" />
    </div>
    <div className="flex h-[22px] shrink-0 items-center bg-gradient-to-r from-[#bfcddb] to-[#d7e4f2] pr-[3px] pl-1 text-xs">
      <span className="flex-1">范围线</span>
      <button aria-label="close sheet">
        <Cross />
      </button>
    </div>
    <Grid />
    <div className="flex h-[31px] shrink-0 items-center border-t border-b border-l-2 border-[#dddddd] border-l-[#777777] bg-gradient-to-b from-[#fdfdfd] to-[#eeeeee] pl-1 text-xs">
      <NavIcon label="first" d="M1 0h2v8H1zM9 0v8L4 4z" />
      <NavIcon label="previous" d="M7 0v8L2 4z" />
      <input aria-label="record" defaultValue="1" className="ml-px h-[22px] w-[59px] bg-white pr-1 text-right text-xs outline-none" />
      <NavIcon label="next" d="m3 0 5 4-5 4z" />
      <NavIcon label="last" d="m1 0 5 4-5 4zM7 0h2v8H7z" />
      <Sep />
      <Tool icon="rowsAll" on />
      <Tool icon="rowsSel" />
      <Sep />
      <span className="ml-1 text-[13px]">(0 / 131 已选择)</span>
    </div>
    <div className="h-[7px] shrink-0 overflow-hidden">
      <button className="ml-[2px] block h-4 border-r border-[#777777] bg-white px-[6px] pt-[2px] text-xs leading-4">范围线</button>
    </div>
  </main>
);

const Side = () => (
  <aside className="flex w-[227px] shrink-0 flex-col">
    <div className="h-[22px] shrink-0 bg-gradient-to-r from-[#bfcddb] to-[#d7e4f2]" />
    <div className="flex h-[26px] shrink-0 items-center bg-gradient-to-b from-[#fdfdfd] to-[#efefef]">
      <Tool icon="treeOff" />
      <Sep />
      <Tool icon="optionsOff" />
      <Caret off />
    </div>
    <div className="h-[197px] shrink-0 border-t border-b border-[#82868f]" />
    <div className="mt-[6px] ml-[51px] h-px w-[106px] bg-[#a0a0a0]" />
  </aside>
);

const NetMeter = () => (
  <div className="absolute top-[203px] right-[6px] z-20 flex items-center font-[Roboto,sans-serif] text-white">
    <div className="relative z-10 flex h-[60px] w-[60px] items-center justify-center rounded-full border border-[#3a3e49] bg-gradient-to-b from-[#5f6573] to-[#4c505d] shadow-[0_0_6px_rgba(0,0,0,0.4)]">
      <span className="text-[25px] leading-7 font-light">30</span>
      <span className="pt-2 text-[10px]">%</span>
      <svg width="60" height="60" viewBox="0 0 60 60" className="absolute -top-px -left-px">
        <defs>
          <linearGradient id="arc" x1="0" y1="0" x2="0" y2="1">
            <stop offset="0" stopColor="#3fd6dc" />
            <stop offset="1" stopColor="#7be08a" />
          </linearGradient>
        </defs>
        <path d="M30 4.500A25.500 25.500 0 0 1 54.500 38" fill="none" stroke="url(#arc)" strokeWidth="1.500" />
      </svg>
    </div>
    <div className="-ml-[30px] flex h-[42px] w-[89px] flex-col rounded-r-full bg-[#2f323d] pr-2 pl-8 text-xs shadow-[0_0_5px_rgba(0,0,0,0.35)]">
      <div className="flex flex-1 items-center border-b border-[#22252d]">
        <svg width="7" height="8" viewBox="0 0 7 8">
          <path d="M3.500 8V1.500M.5 4l3-3 3 3" fill="none" stroke="#45aef5" strokeWidth="1.400" />
        </svg>
        <span className="ml-auto">1.4</span>
        <span className="text-[10px] text-[#8a8d96]">K/s</span>
      </div>
      <div className="flex flex-1 items-center">
        <svg width="7" height="8" viewBox="0 0 7 8">
          <path d="M3.500 0v6.500M.5 4l3 3 3-3" fill="none" stroke="#2fc545" strokeWidth="1.400" />
        </svg>
        <span className="ml-auto">0.3</span>
        <span className="text-[10px] text-[#8a8d96]">K/s</span>
      </div>
    </div>
  </div>
);

export default function App() {
  return (
    <div className="relative flex h-screen flex-col overflow-hidden bg-[#f0f0f0] font-['Open_Sans','Noto_Sans_CJK_SC',sans-serif] text-black">
      <header className="shrink-0 bg-gradient-to-r from-[#f0f0f0] to-[#f8f8f8]">
        <div className="flex h-[7px] items-start overflow-hidden bg-white">
          <svg width="16" height="7" viewBox="0 0 16 7">
            <path d="M1 0h12l-2 2H3z" fill="#2a78b8" />
            <path d="m9 0 5 3" stroke="#6b3c20" strokeWidth="2" />
          </svg>
          <span className="-mt-3 ml-[3px] text-xs leading-4 text-[#999]">无标题</span>
          <span className="ml-20 h-[3px] w-px bg-[#999]" />
        </div>
        <MenuBar />
        <Toolbars />
      </header>
      <div className="flex min-h-0 flex-1">
        <Contents />
        <TableWindow />
        <Side />
      </div>
      <NetMeter />
      <span className="pointer-events-none absolute right-[10px] bottom-2 z-20 font-['Liberation_Sans',sans-serif] text-base leading-5 text-white/70 [text-shadow:1px_1px_1px_rgba(0,0,0,0.22)]">
        https://blog.csdn.net/weixin_45647889
      </span>
    </div>
  );
}
